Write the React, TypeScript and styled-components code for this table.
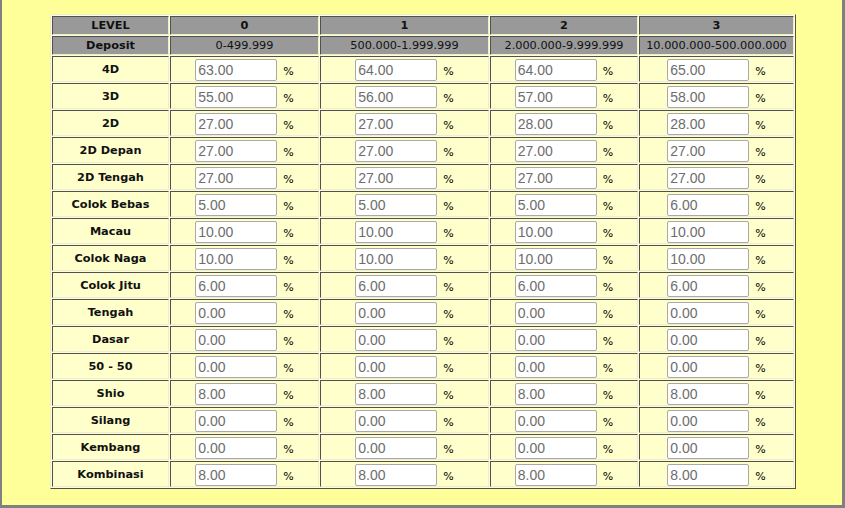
import React from "react";
import styled, { createGlobalStyle } from "styled-components";

const Global = createGlobalStyle`
  html, body { margin: 0; padding: 0; }
  body { background: #ffff99; }
`;

const Page = styled.div`
  box-sizing: border-box;
  width: 845px;
  height: 508px;
  background: #ffff99;
  border-left: 2px solid #808080;
  border-right: 3px solid #808080;
  border-bottom: 3px solid #808080;
  padding: 14px 0 0 48px;
  font-family: "DejaVu Sans", Verdana, sans-serif;
`;

const Table = styled.table`
  border-collapse: separate;
  border-spacing: 1px;
  background: #ffffcc;
  border: 1px solid;
  border-color: #ececd8 #505050 #505050 #ececd8;
  table-layout: fixed;
  width: 744px;
`;

const Cell = styled.td<{ $head?: boolean; $bold?: boolean }>`
  border: 1px solid;
  border-color: #505050 #ececd8 #ececd8 #505050;
  background: ${(p) => (p.$head ? "#999999" : "#ffffcc")};
  color: #111;
  text-align: center;
  font-size: 11.3px;
  font-weight: ${(p) => (p.$bold ? "bold" : "normal")};
  height: ${(p) => (p.$head ? "17px" : "24px")};
  padding: 0;
  white-space: nowrap;
`;

const Input = styled.input`
  box-sizing: border-box;
  width: 82px;
  height: 22px;
  border: 1px solid #a9a9a9;
  border-radius: 2px;
  background: #fff;
  color: #6d6d6d;
  font-family: "Liberation Sans", Arial, sans-serif;
  font-size: 14px;
  padding: 0 2px;
  margin: 1px 0 0 0;
  vertical-align: middle;
  outline: none;
`;

const Pct = styled.span`
  display: inline-block;
  margin-left: 6px;
  font-size: 11px;
  vertical-align: -3px;
  color: #000;
`;

const cols = [
  { level: "0", deposit: "0-499.999", w: 149 },
  { level: "1", deposit: "500.000-1.999.999", w: 169 },
  { level: "2", deposit: "2.000.000-9.999.999", w: 148 },
  { level: "3", deposit: "10.000.000-500.000.000", w: 155 },
];

const rows: [string, string[]][] = [
  ["4D", ["63.00", "64.00", "64.00", "65.00"]],
  ["3D", ["55.00", "56.00", "57.00", "58.00"]],
  ["2D", ["27.00", "27.00", "28.00", "28.00"]],
  ["2D Depan", ["27.00", "27.00", "27.00", "27.00"]],
  ["2D Tengah", ["27.00", "27.00", "27.00", "27.00"]],
  ["Colok Bebas", ["5.00", "5.00", "5.00", "6.00"]],
  ["Macau", ["10.00", "10.00", "10.00", "10.00"]],
  ["Colok Naga", ["10.00", "10.00", "10.00", "10.00"]],
  ["Colok Jitu", ["6.00", "6.00", "6.00", "6.00"]],
  ["Tengah", ["0.00", "0.00", "0.00", "0.00"]],
  ["Dasar", ["0.00", "0.00", "0.00", "0.00"]],
  ["50 - 50", ["0.00", "0.00", "0.00", "0.00"]],
  ["Shio", ["8.00", "8.00", "8.00", "8.00"]],
  ["Silang", ["0.00", "0.00", "0.00", "0.00"]],
  ["Kembang", ["0.00", "0.00", "0.00", "0.00"]],
  ["Kombinasi", ["8.00", "8.00", "8.00", "8.00"]],
];

export default function App() {
  return (
    <>
      <Global />
      <Page>
        <Table>
          <colgroup>
            <col style={{ width: 117 }} />
            {cols.map((c) => (
              <col key={c.level} style={{ width: c.w }} />
            ))}
          </colgroup>
          <tbody>
            <tr>
              <Cell $head $bold>LEVEL</Cell>
              {cols.map((c) => (
                <Cell $head $bold key={c.level}>{c.level}</Cell>
              ))}
            </tr>
            <tr>
              <Cell $head $bold>Deposit</Cell>
              {cols.map((c) => (
                <Cell $head key={c.level}>{c.deposit}</Cell>
              ))}
            </tr>
            {rows.map(([label, vals]) => (
              <tr key={label}>
                <Cell $bold>{label}</Cell>
                {vals.map((v, i) => (
                  <Cell key={i}>
                    <Input defaultValue={v} />
                    <Pct>%</Pct>
                  </Cell>
                ))}
              </tr>
            ))}
          </tbody>
        </Table>
      </Page>
    </>
  );
}
